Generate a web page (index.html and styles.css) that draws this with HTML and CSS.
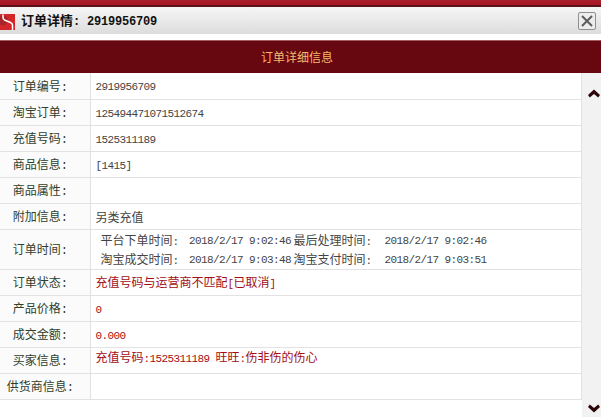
FILE: index.html
```html
<!DOCTYPE html>
<html lang="zh">
<head>
<meta charset="utf-8">
<title>订单详情</title>
<link rel="stylesheet" href="styles.css">
</head>
<body>
<div class="topbar"></div>
<header class="titlebar">
  <svg class="logo" width="15" height="16" viewBox="0 0 15 16"><rect width="15" height="16" fill="#d3262a"/><path d="M0 2h6l2 3 0 3-3 3H0z" fill="#a9242a"/><path d="M3 0.500l0 3q0 1.500 1.500 2.500l6 2.500q2 1 2 2.500V16" fill="none" stroke="#fff" stroke-width="1.500"/></svg>
  <h1 class="title">订单详情<span class="title-no">: 2919956709</span></h1>
  <button class="close" aria-label="关闭"><svg width="12" height="12" viewBox="0 0 12 12"><path d="M1 1l10 10M11 1L1 11" stroke="#5c5c5c" stroke-width="2" fill="none"/></svg></button>
</header>
<div class="band">订单详细信息</div>
<main class="content">
  <table class="details">
    <tr><th>订单编号:</th><td><span class="num">2919956709</span></td></tr>
    <tr><th>淘宝订单:</th><td><span class="num">125494471071512674</span></td></tr>
    <tr><th>充值号码:</th><td><span class="num">1525311189</span></td></tr>
    <tr><th>商品信息:</th><td><span class="num">[1415]</span></td></tr>
    <tr><th>商品属性:</th><td></td></tr>
    <tr><th>附加信息:</th><td>另类充值</td></tr>
    <tr class="time-row"><th>订单时间:</th><td>
      <div class="times">
        <span>平台下单时间<span class="num">:</span></span><span class="num">2018/2/17 9:02:46</span><span>最后处理时间<span class="num">:</span></span><span class="num">2018/2/17 9:02:46</span>
        <span>淘宝成交时间<span class="num">:</span></span><span class="num">2018/2/17 9:03:48</span><span>淘宝支付时间<span class="num">:</span></span><span class="num">2018/2/17 9:03:51</span>
      </div>
    </td></tr>
    <tr><th>订单状态:</th><td class="red">充值号码与运营商不匹配<span class="num">[</span>已取消<span class="num">]</span></td></tr>
    <tr><th>产品价格:</th><td class="red"><span class="num">0</span></td></tr>
    <tr><th>成交金额:</th><td class="red"><span class="num">0.000</span></td></tr>
    <tr class="buyer"><th>买家信息:</th><td class="red"><div class="raised">充值号码<span class="num">:1525311189 </span>旺旺<span class="num">:</span>伤非伤的伤心</div></td></tr>
    <tr><th>供货商信息:</th><td></td></tr>
  </table>
  <aside class="scroll">
    <svg width="12" height="9" viewBox="0 0 12 9"><path d="M0 6l6-5.500 6 5.500-1.800 2.500L6 5 1.800 8.500z" fill="#2c0508"/></svg>
    <svg width="12" height="9" viewBox="0 0 12 9"><path d="M0 3l6 5.500 6-5.500L10.200.5 6 4 1.800.5z" fill="#2c0508"/></svg>
  </aside>
</main>
</body>
</html>
```
FILE: styles.css
```css
* { box-sizing: border-box; }
html, body { margin: 0; padding: 0; }
body {
  width: 601px;
  height: 417px;
  overflow: hidden;
  background: #fff;
  font: 12px/14px "Noto Sans CJK SC", "Liberation Mono", monospace;
  color: #444;
}
.topbar {
  height: 7px;
  background: linear-gradient(#a81e2b 0, #a81526 70%, #5a1418 72%, #5a1418 100%);
}
.titlebar {
  height: 27px;
  display: flex;
  align-items: center;
  background: linear-gradient(#f6f6f6, #dcdcdc);
}
.logo { flex: none; margin-top: 2px; }
.title {
  margin: 0 0 0 6px;
  flex: 1;
  font-size: 13px;
  font-weight: 700;
  color: #111;
}
.title-no {
  font-family: "Liberation Mono", monospace;
  font-size: 12px;
  letter-spacing: -.2px;
  white-space: pre;
}
.close {
  width: 18px;
  height: 18px;
  margin: 0 5px 0 0;
  padding: 0;
  display: flex;
  align-items: center;
  justify-content: center;
  border: 1px solid #8f8f8f;
  border-radius: 2px;
  background: #ececec;
}
.band {
  margin-top: 6px;
  height: 33px;
  line-height: 31px;
  text-align: center;
  background: #67070f;
  border-top: 1px solid #a35c60;
  color: #f8b96c;
  font-size: 12px;
  padding-right: 7px;
}
.content { display: flex; align-items: flex-start; height: 344px; }
.details {
  width: 582px;
  flex: none;
  border-collapse: collapse;
  border-right: 1px solid #e2e2e2;
  border-bottom: 1px solid #e2e2e2;
}
.details tr { height: 26px; border-bottom: 1px solid #e2e2e2; }
.details .time-row { height: 40px; }
.details th {
  width: 90px;
  padding: 4px 9px 0 0;
  text-align: center;
  font-family: "Liberation Mono", "Noto Sans CJK SC", monospace;
  font-weight: 400;
  color: #2f3f2c;
  background: #fbfbfb;
  border-right: 1px solid #e2e2e2;
  white-space: nowrap;
}
.details td { padding: 1px 0 0 5px; color: #444; white-space: nowrap; }
.details td.red { color: #a40d12; }
.num {
  font-family: "Liberation Mono", monospace;
  font-size: 11px;
  letter-spacing: -.6px;
  white-space: pre;
}
.raised { margin-top: -6px; }
.times {
  display: grid;
  grid-template-columns: 88.5px 104.5px 91px auto;
  align-items: center;
  justify-content: start;
  row-gap: 3px;
  padding: 2px 0 0 5px;
}
.scroll {
  flex: 1;
  height: 344px;
  background: #f2f2f2;
  display: flex;
  flex-direction: column;
  justify-content: space-between;
  align-items: center;
  padding: 16px 0 4px 4px;
}
```
